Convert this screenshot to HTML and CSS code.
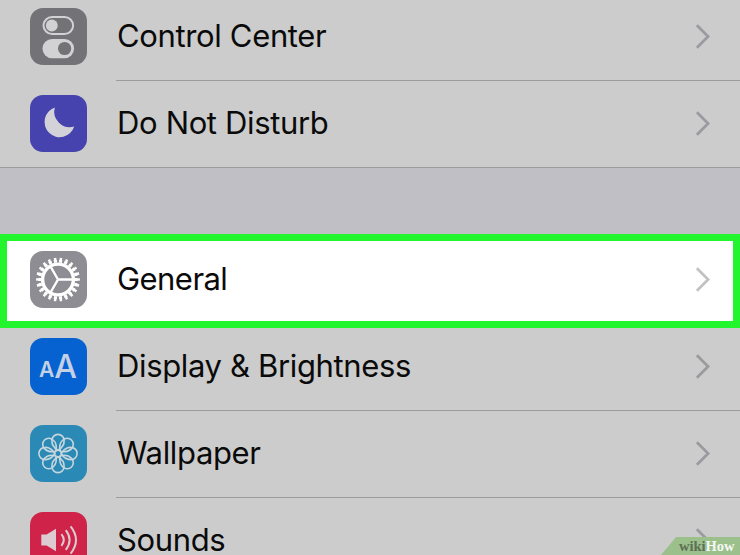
FILE: index.html
```html
<!DOCTYPE html>
<html lang="en">
<head>
<meta charset="UTF-8">
<meta name="viewport" content="width=device-width, initial-scale=1.0">
<title>Settings</title>
<link rel="stylesheet" href="styles.css">
</head>
<body>
<div class="screen">
  <div class="group group-top">
    <div class="row">
      <div class="icon gray">
        <svg viewBox="0 0 57 57">
          <rect x="13.5" y="8.9" width="29.6" height="17.2" rx="8.6" fill="none" stroke="#d2d2d4" stroke-width="2"/>
          <circle cx="21.8" cy="17.5" r="5.9" fill="#d2d2d4"/>
          <rect x="12.5" y="31" width="31.6" height="19.2" rx="9.6" fill="#d2d2d4"/>
          <circle cx="34.6" cy="40.5" r="6.6" fill="#737276"/>
        </svg>
      </div>
      <div class="cell">
        <span class="label">Control Center</span>
        <svg class="chevron" viewBox="0 0 16 28"><path d="M2 2 14 14 2 26"/></svg>
      </div>
    </div>
    <div class="row last">
      <div class="icon purple">
        <svg viewBox="0 0 57 57">
          <path d="M24.8 12.6A15.2 15.2 0 1 0 44.2 31.6A15.6 15.6 0 0 1 24.8 12.6Z" fill="#d2d2d8"/>
        </svg>
      </div>
      <div class="cell">
        <span class="label">Do Not Disturb</span>
        <svg class="chevron" viewBox="0 0 16 28"><path d="M2 2 14 14 2 26"/></svg>
      </div>
    </div>
  </div>

  <div class="group">
    <div class="row selected">
      <div class="icon gray">
        <svg viewBox="0 0 57 57" fill="none" stroke="#fff">
          <g transform="translate(28 28.5)">
            <circle r="15.4" stroke-width="3.4"/>
            <circle r="18.4" stroke-width="3" pathLength="220" stroke-dasharray="6 4" stroke-dashoffset="3"/>
            <circle r="20.6" stroke-width="2.6" pathLength="220" stroke-dasharray="4.2 5.8" stroke-dashoffset="2.1"/>
            <path d="M0 0H15M0 0-7.5 -13M0 0-7.5 13" stroke-width="2.4"/>
          </g>
        </svg>
      </div>
      <div class="cell">
        <span class="label general">General</span>
        <svg class="chevron" viewBox="0 0 16 28"><path d="M2 2 14 14 2 26"/></svg>
      </div>
    </div>
    <div class="row">
      <div class="icon blue">
        <span class="small-a">A</span><span class="big-a">A</span>
      </div>
      <div class="cell">
        <span class="label">Display &amp; Brightness</span>
        <svg class="chevron" viewBox="0 0 16 28"><path d="M2 2 14 14 2 26"/></svg>
      </div>
    </div>
    <div class="row">
      <div class="icon cyan">
        <svg viewBox="0 0 57 57" fill="none" stroke="#c6d6de" stroke-width="1.6">
          <defs>
            <path id="petal" d="M0 -3.2C-4 -5.6 -6.3 -9.6 -6.1 -13A6.1 6.1 0 0 1 6.1 -13C6.3 -9.6 4 -5.6 0 -3.2Z"/>
          </defs>
          <g transform="translate(28 28.5)">
            <circle r="3.4"/>
            <use href="#petal"/>
            <use href="#petal" transform="rotate(45)"/>
            <use href="#petal" transform="rotate(90)"/>
            <use href="#petal" transform="rotate(135)"/>
            <use href="#petal" transform="rotate(180)"/>
            <use href="#petal" transform="rotate(225)"/>
            <use href="#petal" transform="rotate(270)"/>
            <use href="#petal" transform="rotate(315)"/>
          </g>
        </svg>
      </div>
      <div class="cell">
        <span class="label">Wallpaper</span>
        <svg class="chevron" viewBox="0 0 16 28"><path d="M2 2 14 14 2 26"/></svg>
      </div>
    </div>
    <div class="row">
      <div class="icon red">
        <svg viewBox="0 0 57 57" fill="none" stroke="#dccbd0" stroke-width="2">
          <path d="M11.3 22.6H16.6L26 16.8V39.2L16.6 33.4H11.3Z" fill="#dccbd0" stroke="none"/>
          <path d="M31.4 22.2Q36.2 28 31.4 33.8M35.8 18.2Q43.4 28 35.8 37.8M40.6 14.4Q51.4 28 40.6 41.6"/>
        </svg>
      </div>
      <div class="cell">
        <span class="label">Sounds</span>
        <svg class="chevron" viewBox="0 0 16 28"><path d="M2 2 14 14 2 26"/></svg>
      </div>
    </div>
  </div>

  <div class="watermark"><span>wiki</span>How</div>
</div>
</body>
</html>
```
FILE: styles.css
```css
body {
  margin: 0;
  background-color: #c0bfc6;
  font-family: Inter, "Liberation Sans", sans-serif;
}

.screen {
  position: relative;
  width: 740px;
  height: 555px;
  overflow: hidden;
}

.group {
  background-color: #cccccc;
}

/* first row is scrolled partly out of view */
.group-top {
  margin-top: -6px;
  margin-bottom: 69px;
}

.row {
  position: relative;
  display: flex;
  height: 87px;
  padding-left: 29.5px;
  box-sizing: border-box;
}

.row.last {
  border-bottom: 1px solid #9c9ca0;
}

.row.last .cell {
  border-bottom: none;
}

.icon {
  display: flex;
  justify-content: center;
  width: 57px;
  height: 57px;
  margin-top: 14px;
  margin-right: 29.5px;
  border-radius: 13px;
  color: #c4d0e6;
}

.icon svg {
  width: 57px;
  height: 57px;
}

.gray { background-color: #737276; }
.purple { background-color: #4643ae; }
.blue { background-color: #0562d0; }
.cyan { background-color: #2a8ab5; }
.red { background-color: #cf2349; }

.small-a,
.big-a {
  line-height: 57px;
}

.small-a {
  font-size: 21px;
  font-weight: 600;
  margin-top: 3px;
}

.big-a {
  font-size: 32px;
  font-weight: 500;
}

.cell {
  flex: 1;
  display: flex;
  align-items: center;
  justify-content: space-between;
  padding-right: 30px;
  border-bottom: 1px solid #9c9ca0;
}

.label {
  margin-left: 1px;
  padding-bottom: 2px;
  font-size: 31px;
  line-height: 40px;
  letter-spacing: -0.35px;
  color: #0a0a0a;
  white-space: nowrap;
}

.label.general {
  letter-spacing: -0.55px;
}

.chevron {
  width: 15px;
  height: 27px;
  margin-bottom: 1px;
  fill: none;
  stroke: #9b9b9f;
  stroke-width: 3;
}

/* highlighted row */
.selected {
  background-color: #fff;
  z-index: 1;
}

.selected::after {
  content: "";
  position: absolute;
  top: -3px;
  right: 0;
  bottom: -4px;
  left: 0;
  border: 7px solid #22f52e;
}

.selected .gray {
  background-color: #8e8d93;
}

.selected .chevron {
  stroke: #c2c2c4;
}

.watermark {
  position: absolute;
  right: 0;
  bottom: 0;
  width: 79px;
  height: 18px;
  padding-left: 18px;
  box-sizing: border-box;
  background-color: #9bc08c;
  clip-path: polygon(15px 0, 100% 0, 100% 100%, 0 100%);
  color: #f4f8f2;
  font: bold 14.5px/19px "Liberation Serif", serif;
}

.watermark span {
  color: #5c7055;
}
```
